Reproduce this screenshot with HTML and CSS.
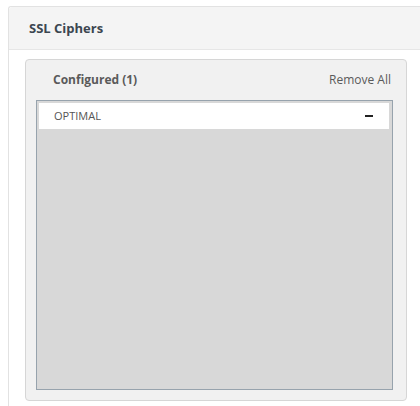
FILE: index.html
```html
<!DOCTYPE html>
<html>
<head>
<meta charset="utf-8">
<link rel="stylesheet" href="styles.css">
</head>
<body>
<div class="panel">
  <div class="panel-header">SSL Ciphers</div>
  <div class="panel-body">
    <div class="box">
      <div class="box-head">
        <span class="box-title">Configured (1)</span>
        <span class="remove-all">Remove All</span>
      </div>
      <div class="list">
        <div class="row">
          <span class="row-label">OPTIMAL</span>
          <span class="minus"></span>
        </div>
      </div>
    </div>
  </div>
</div>
</body>
</html>
```
FILE: styles.css
```css
html, body {
  margin: 0;
  padding: 0;
  background: #ffffff;
  font-family: "Open Sans", "DejaVu Sans", sans-serif;
}
* {
  box-sizing: border-box;
}
.panel {
  margin: 6px 0 0 8px;
  border-left: 1px solid #e2e2e2;
  border-top: 1px solid #e2e2e2;
  border-top-left-radius: 3px;
  height: 400px;
}
.panel-header {
  height: 43px;
  background: #f4f4f4;
  border-bottom: 1px solid #e6e6e6;
  border-top-left-radius: 3px;
  padding: 0 0 1px 20px;
  display: flex;
  align-items: center;
  font-size: 13px;
  font-weight: 700;
  color: #3b4650;
}
.panel-body {
  padding: 9px 13px 0 16px;
}
.box {
  height: 342px;
  border: 1px solid #d6d6d6;
  border-radius: 4px;
  background: #f1f1f1;
  padding: 0 13px 10px 10px;
  display: flex;
  flex-direction: column;
}
.box-head {
  height: 40px;
  flex: none;
  display: flex;
  align-items: center;
  justify-content: space-between;
  padding: 0 2px 1px 17px;
  font-size: 12px;
  color: #5a5a5a;
}
.box-title {
  font-weight: 700;
}
.list {
  flex: 1;
  border: 1px solid #97a3ad;
  background: #d8d8d8;
  padding: 2px 3px 2px 2px;
}
.row {
  height: 26px;
  background: #fff;
  display: flex;
  align-items: center;
  justify-content: space-between;
  padding: 0 16px 1px 15px;
}
.row-label {
  font-size: 11px;
  color: #555;
}
.minus {
  width: 8px;
  height: 2px;
  background: #222;
}
```
